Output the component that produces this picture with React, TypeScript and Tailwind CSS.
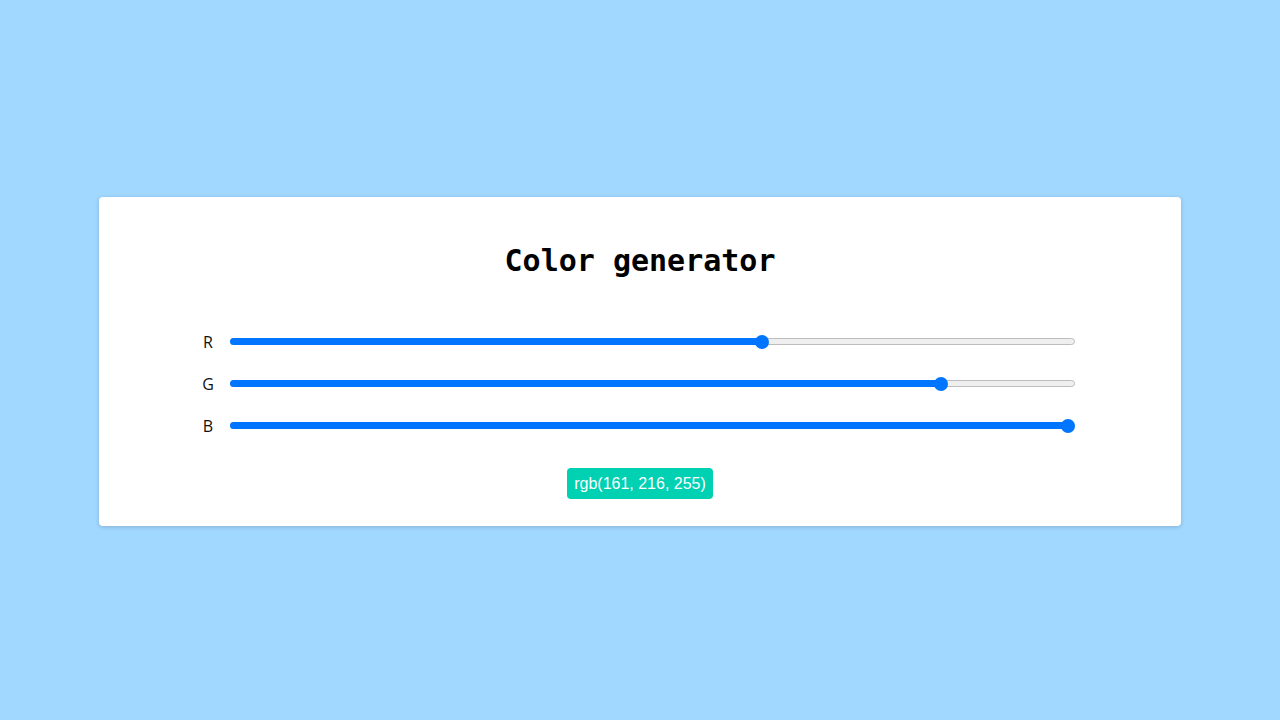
const channels = [
  { label: 'R', value: 161 },
  { label: 'G', value: 216 },
  { label: 'B', value: 255 },
]

function Slider({ value }: { value: number }) {
  const pct = value / 255
  // thumb is 14px wide, its centre travels from 7px to (width - 7px)
  const pos = `calc(7px + (100% - 14px) * ${pct})`
  return (
    <div className="relative ml-[9px] mr-[10px] flex h-[14px] flex-1 items-center">
      <div className="h-[7px] w-full rounded-full border border-[#bdbdbd] bg-[#efefef]" />
      <div className="absolute left-0 h-[7px] rounded-full bg-[#0075ff]" style={{ width: pos }} />
      <div
        className="absolute top-0 h-[14px] w-[14px] -translate-x-1/2 rounded-full bg-[#0075ff]"
        style={{ left: pos }}
      />
    </div>
  )
}

export default function App() {
  return (
    <div className="flex h-screen items-center justify-center bg-[#a1d8ff]" style={{ fontFamily: '"Open Sans", sans-serif' }}>
      <div className="mt-[2px] w-[1082px] rounded-[4px] bg-white pt-[46px] pb-[27px] shadow-[0_1px_4px_rgba(10,10,10,0.18)]">
        <h1
          className="text-center text-[30px] font-bold leading-[35px] text-black"
          style={{ fontFamily: '"DejaVu Sans Mono", monospace' }}
        >
          Color generator
        </h1>
        <div className="mx-auto mt-[43px] w-[890px]">
          {channels.map(c => (
            <div key={c.label} className="flex h-[42px] items-center">
              <span className="w-[26px] text-center text-[16px] text-[#111]">{c.label}</span>
              <Slider value={c.value} />
            </div>
          ))}
        </div>
        <div className="mt-[21px] flex justify-center">
          <span
            className="rounded-[4px] bg-[#00d1b2] px-[7px] text-[16px] leading-[31px] text-white"
            style={{ fontFamily: '"Liberation Sans", Arial, sans-serif' }}
          >
            rgb(161, 216, 255)
          </span>
        </div>
      </div>
    </div>
  )
}
